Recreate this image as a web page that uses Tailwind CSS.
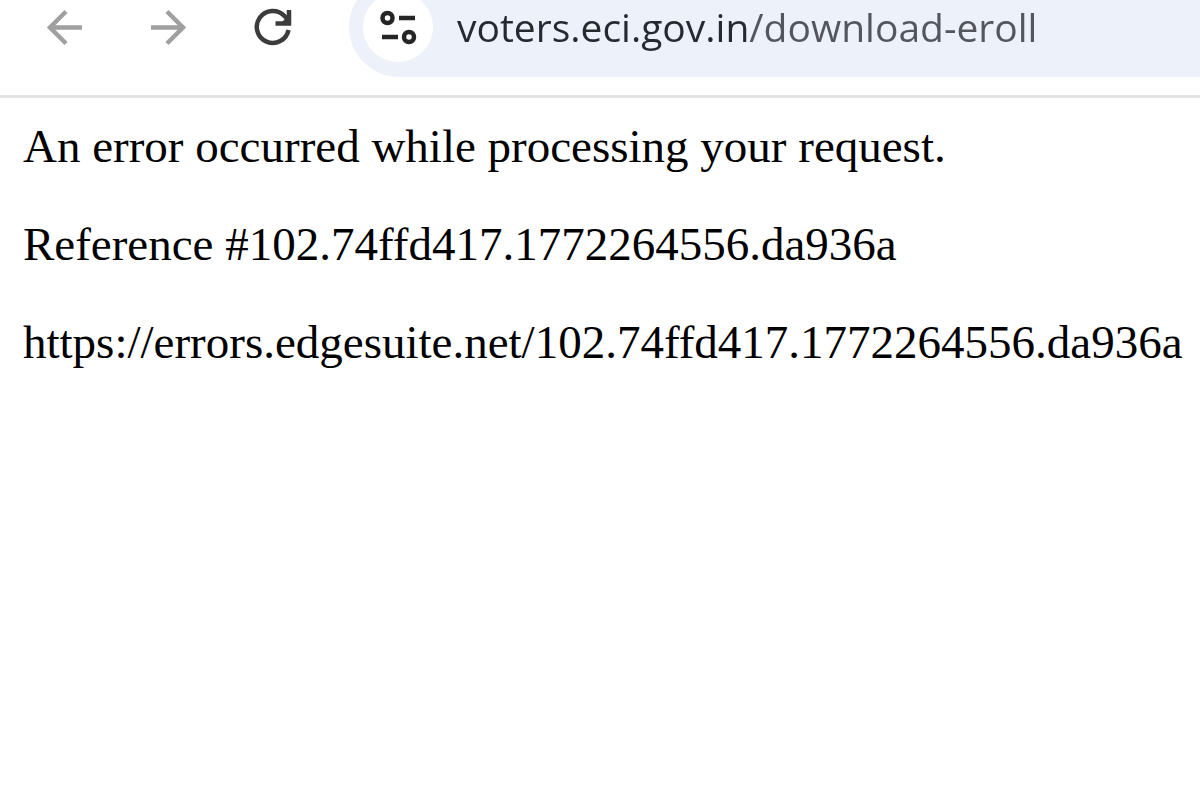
<!doctype html>
<html lang="en">

<head>
  <meta charset="UTF-8" />
  <meta name="viewport" content="width=device-width, initial-scale=1.0" />
  <title>voters.eci.gov.in/download-eroll</title>
  <script src="https://cdn.jsdelivr.net/npm/@tailwindcss/browser@4"></script>
</head>

<body class="min-h-screen overflow-x-hidden bg-white">
  <!-- browser toolbar -->
  <header class="-mt-[23px] flex items-center border-b-[3px] border-[#e4e4e4] pb-[18px] pl-[39px]">
    <nav class="flex shrink-0 items-center gap-[52px] pr-[50px]">
      <button type="button" aria-label="Back" class="text-[#a0a0a0]">
        <svg class="size-[52px]" viewBox="0 0 52 52" fill="none" stroke="currentColor" stroke-width="4.5">
          <path d="M43 26.5H11M27 10.5L11 26.5L27 42.5" />
        </svg>
      </button>
      <button type="button" aria-label="Forward" class="text-[#a0a0a0]">
        <svg class="size-[52px]" viewBox="0 0 52 52" fill="none" stroke="currentColor" stroke-width="4.5">
          <path d="M8 26.5H40M24 10.5L40 26.5L24 42.5" />
        </svg>
      </button>
      <button type="button" aria-label="Reload" class="text-[#3c3c3c]">
        <svg class="size-[52px]" viewBox="0 0 52 52" fill="none" stroke="currentColor" stroke-width="4.5">
          <path d="M41.5 29A16 16 0 1 1 37.5 15L42 20" />
          <path d="M42 9V22.5H28.5" />
          <path d="M34 22L42 14V22Z" fill="currentColor" stroke="none" />
        </svg>
      </button>
    </nav>
    <div class="flex h-[100px] grow items-center rounded-l-full bg-[#ecf1fa] pl-[14px]">
      <button type="button" aria-label="View site information" class="flex size-[70px] shrink-0 items-center justify-center rounded-full bg-white text-[#262626]">
        <svg class="size-10" viewBox="0 0 40 40" fill="none" stroke="currentColor" stroke-width="4.5">
          <circle cx="9.5" cy="11" r="5" />
          <path d="M21 11H37M4 30H20" />
          <circle cx="31" cy="30" r="5" />
        </svg>
      </button>
      <!-- host is darker than the path -->
      <input type="text" aria-label="Address" value="voters.eci.gov.in/download-eroll" spellcheck="false" class="ml-6 min-w-0 grow bg-[linear-gradient(90deg,#262a30_292px,#53565c_292px)] bg-clip-text font-['Open_Sans','Noto_Sans',sans-serif] text-[39px] leading-[60px] text-transparent outline-none">
    </div>
  </header>

  <main class="space-y-[46px] px-[23px] pt-[22px] font-['Liberation_Serif',serif] text-[47px] leading-[52px] text-black">
    <p>An error occurred while processing your request.</p>
    <p>Reference #102.74ffd417.1772264556.da936a</p>
    <p class="whitespace-nowrap">https://errors.edgesuite.net/102.74ffd417.1772264556.da936a</p>
  </main>
</body>

</html>
